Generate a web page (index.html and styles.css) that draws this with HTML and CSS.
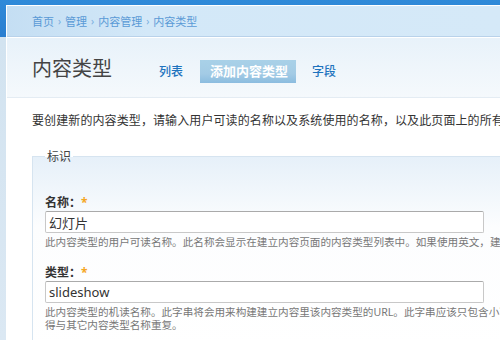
FILE: index.html
```html
<!DOCTYPE html>
<html lang="zh">
<head>
<meta charset="utf-8">
<title>内容类型</title>
<link rel="stylesheet" href="styles.css">
</head>
<body>
<div class="frame">
  <div class="panel">
    <div class="crumbs">
      <a href="#">首页</a><span class="sep">›</span><a href="#">管理</a><span class="sep">›</span><a href="#">内容管理</a><span class="sep">›</span><a href="#">内容类型</a>
    </div>
    <div class="header">
      <h1 class="title">内容类型</h1>
      <nav class="tabs">
        <a href="#" class="tab">列表</a>
        <a href="#" class="tab active">添加内容类型</a>
        <a href="#" class="tab">字段</a>
      </nav>
    </div>
    <div class="content">
      <p class="intro">要创建新的内容类型，请输入用户可读的名称以及系统使用的名称，以及此页面上的所有设置。</p>
      <fieldset class="box">
        <legend class="legend">标识</legend>
        <div class="field">
          <label class="label">名称：<span class="req">*</span></label>
          <input class="input" type="text" value="幻灯片">
          <div class="desc">此内容类型的用户可读名称。此名称会显示在建立内容页面的内容类型列表中。如果使用英文，建议此名称以大写字母开头。</div>
        </div>
        <div class="field">
          <label class="label">类型：<span class="req">*</span></label>
          <input class="input" type="text" value="slideshow">
          <div class="desc">此内容类型的机读名称。此字串将会用来构建建立内容里该内容类型的URL。此字串应该只包含小写字母、数字和下划线。名称不<br>得与其它内容类型名称重复。</div>
        </div>
      </fieldset>
    </div>
  </div>
</div>
</body>
</html>
```
FILE: styles.css
```css
html, body {
  margin: 0;
  padding: 0;
  width: 500px;
  height: 340px;
  overflow: hidden;
}
body {
  font-family: "Noto Sans", "Noto Sans CJK SC", sans-serif;
  color: #333;
}
.frame {
  width: 500px;
  height: 340px;
  padding: 5px 0 0 6px;
  box-sizing: border-box;
  background: linear-gradient(to bottom, #2f8ad9 0, #2a7ed0 37px, #d2e3f0 37px, #dbe8f3 340px);
}
.panel {
  height: 100%;
  border-left: 1px solid #fff;
  border-top: 1px solid #fff;
  background: #fff;
  white-space: nowrap;
  overflow: hidden;
}
.crumbs {
  height: 30px;
  display: flex;
  align-items: center;
  padding-left: 25px;
  font-size: 11px;
  background: linear-gradient(to right, #c4def3 0, #d3e8f8 140px, #d5e9f8 100%);
  border-bottom: 1px solid #b9d2ea;
}
.crumbs a {
  color: #5a9ad6;
  text-decoration: none;
}
.crumbs .sep {
  color: #7aaede;
  margin: 0 4px;
  font-size: 10px;
}
.header {
  border-top: 1px solid #fff;
  height: 59px;
  display: flex;
  align-items: center;
  padding-left: 25px;
  background: linear-gradient(to bottom, #e8f2fa, #f5f9fc);
  border-bottom: 1px solid #e4ecf3;
}
.title {
  margin: 0;
  font-size: 20px;
  font-weight: normal;
  color: #444;
  line-height: 24px;
  position: relative;
  top: 1px;
}
.tabs {
  display: flex;
  align-items: center;
  margin-left: 31px;
  margin-top: 8px;
}
.tab {
  font-size: 12px;
  color: #1e73be;
  text-decoration: none;
  font-weight: 500;
  padding: 0 16px;
  line-height: 23px;
}
.tab.active {
  margin-left: 1px;
  background: linear-gradient(to bottom, #a9d1e8 0, #a3cbe5 60%, #8bbcdf 100%);
  color: #fff;
  font-size: 13px;
  font-weight: bold;
  padding: 0 10px;
  width: 76px;
  text-align: center;
}
.content {
  padding: 14px 0 0 25px;
}
.intro {
  margin: 0;
  font-size: 12px;
  line-height: 18px;
  letter-spacing: 0.1px;
}
.box {
  margin: 17px 0 0 0;
  padding: 30px 0 0 12px;
  border: 1px solid #d6e4f0;
  border-right: none;
  border-bottom: none;
  background: linear-gradient(to bottom, #e6f0f9 0, #fcfdfe 70px, #fff 100%);
  min-width: 0;
}
.legend {
  font-size: 12px;
  color: #444;
  padding: 0 2px;
  margin-left: 0;
}
.field {
  margin-bottom: 16px;
}
.label {
  display: block;
  font-size: 12px;
  font-weight: bold;
  color: #333;
  line-height: 16px;
  margin-bottom: 0;
}
.req {
  color: #f5a623;
}
.input {
  display: block;
  width: 439px;
  height: 22px;
  box-sizing: border-box;
  border: 1px solid #c8c8c8;
  border-top-color: #aaa;
  border-radius: 2px;
  padding: 0 3px;
  font-family: "Noto Sans", "Noto Sans CJK SC", sans-serif;
  font-size: 13px;
  color: #333;
  background: #fff;
}
.desc {
  font-size: 10.6px;
  color: #777;
  line-height: 13px;
  margin-top: 3px;
}
```
